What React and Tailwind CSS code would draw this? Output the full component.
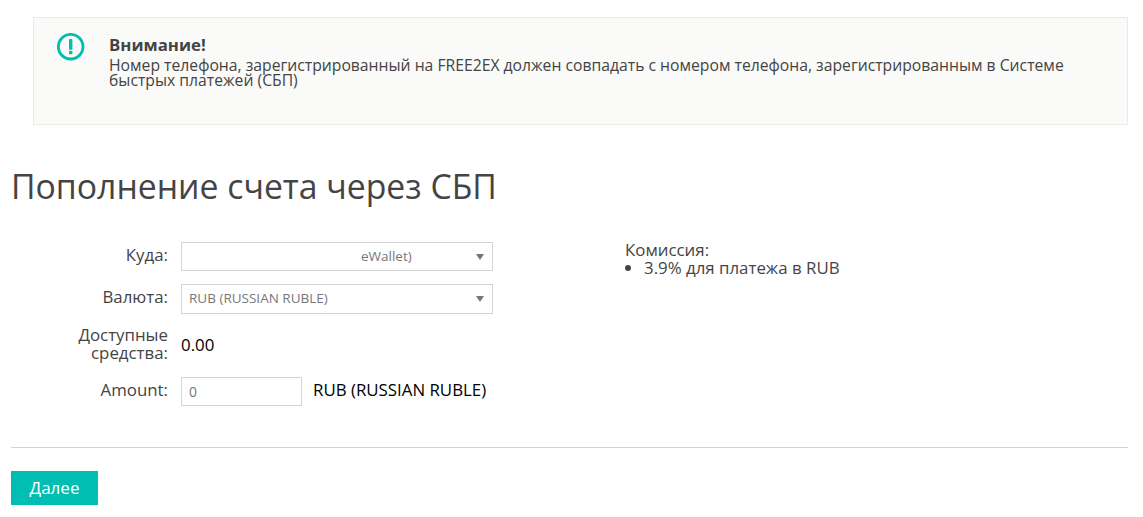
import React from 'react';

const Arrow = () => (
    <span className="w-0 h-0 border-x-[4.5px] border-x-transparent border-t-[6px] border-t-[#777]" />
);

const FormRow = ({ label, children, className }) => (
    <div className={`flex items-center ${className}`}>
        <label className="w-[157px] text-right text-[16.85px] leading-[18px] text-[#444] mr-[13px] shrink-0">
            {label}
        </label>
        {children}
    </div>
);

const SelectBox = ({ children, className }) => (
    <div className={`w-[312px] border border-[#d4d4d4] flex items-center justify-between pl-2 pr-[8.5px] text-[13.5px] text-[#777] ${className}`}>
        {children}
        <Arrow />
    </div>
);

export default function App() {
    return (
        <div className="w-[1143px] h-[517px] bg-white overflow-hidden pl-[11px] pr-[15px] pt-[17px] font-['Open_Sans',sans-serif]">
            <div className="ml-[22px] h-[108px] bg-[#fafaf8] border border-[#ebebdf] flex pl-[23px] pt-[15px]">
                <svg width="28" height="28" viewBox="0 0 28 28" className="shrink-0">
                    <circle cx="13.7" cy="13.7" r="12.3" fill="none" stroke="#00bfb2" strokeWidth="2.9" />
                    <rect x="12" y="6" width="3.4" height="10.7" rx="0.8" fill="#00bfb2" />
                    <rect x="12" y="17.8" width="3.4" height="3.4" rx="0.6" fill="#00bfb2" />
                </svg>
                <div className="ml-[24px] pt-[2px] w-[975px] text-[15.72px] text-[#444]">
                    <div className="font-bold text-[16.8px] leading-[20px]">Внимание!</div>
                    <p className="leading-[15px] mt-[3px]">
                        Номер телефона, зарегистрированный на FREE2EX должен совпадать с номером телефона, зарегистрированным в Системе быстрых платежей (СБП)
                    </p>
                </div>
            </div>

            <h1 className="mt-[39px] text-[33.75px] leading-[44px] text-[#444]">Пополнение счета через СБП</h1>

            <div className="flex mt-[34px] h-[164px]">
                <div className="w-[615px] shrink-0">
                    <FormRow label={<span className="relative -top-[2px]">Куда:</span>}>
                        <SelectBox className="h-[29px]">
                            <span className="ml-[171px] -mt-[1px]">eWallet)</span>
                        </SelectBox>
                    </FormRow>
                    <FormRow label={<span className="relative -top-[2px]">Валюта:</span>} className="mt-[13px]">
                        <SelectBox className="h-[30px]">
                            <span className="-mt-[1px] -ml-[1px]">RUB (RUSSIAN RUBLE)</span>
                        </SelectBox>
                    </FormRow>
                    <FormRow label={<>Доступные<br />средства:</>} className="mt-[12px]">
                        <span className="mt-[1px] text-[16.85px] text-black">0.00</span>
                    </FormRow>
                    <FormRow label={<span className="relative -top-[2px]">Amount:</span>} className="mt-[15px]">
                        <input
                            readOnly
                            value="0"
                            className="w-[121px] h-[29px] border border-[#d4d4d4] px-[7px] text-[14px] text-[#777] outline-none"
                        />
                        <span className="ml-[11px] -mt-[3px] text-[16.85px] text-black">RUB (RUSSIAN RUBLE)</span>
                    </FormRow>
                </div>
                <div className="text-[16.85px] leading-[18px] text-[#444] -mt-[1px] -ml-[1px]">
                    <div>Комиссия:</div>
                    <ul className="list-disc pl-[19px]">
                        <li>3.9% для платежа в RUB</li>
                    </ul>
                </div>
            </div>

            <hr className="mt-[41px] border-t border-[#d4d4d4]" />

            <button className="mt-[23px] w-[87px] h-[34px] bg-[#00bfb2] text-white text-[17px]">Далее</button>
        </div>
    );
}
